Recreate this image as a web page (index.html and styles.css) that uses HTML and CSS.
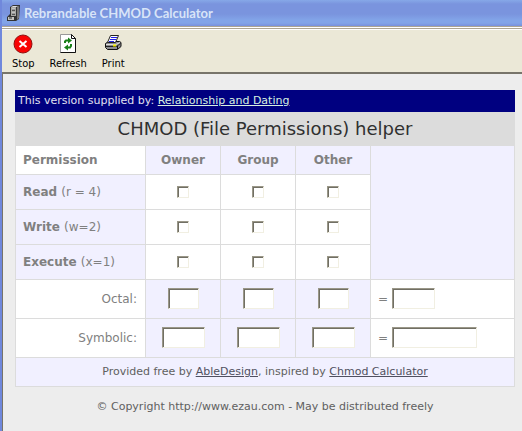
FILE: index.html
```
<!DOCTYPE html>
<html lang="en">
<head>
  <meta charset="UTF-8" />
  <title>Rebrandable CHMOD Calculator</title>
  <meta name="viewport" content="width=device-width, initial-scale=1"/>
  <link rel="stylesheet" href="styles.css">
</head>
<body>
  <div class="window">
    <div class="titlebar">
      <svg class="app-icon" width="16" height="18" viewBox="0 0 16 18" aria-hidden="true">
        <path d="M4 3l3-2h7l-1 14-3 2H1v-4l3-3z" fill="#333"/>
        <path d="M5 3h5v9H5z" fill="#a9a9a5"/>
        <path d="M5 3l2-1h6l-3 1z" fill="#ddd"/>
        <path d="M11 3l2-1v12l-2 2z" fill="#777"/>
        <path d="M6 5h3v2H6zM6 9h3v2H6z" fill="#555"/>
        <path d="M6 5h3M6 9h3" stroke="#ddd"/>
        <path d="M2 13h6v3H2z" fill="#c4c4c0"/>
        <path d="M3 14h3" stroke="#333"/>
      </svg>
      <span class="title">Rebrandable CHMOD Calculator</span>
    </div>
    <div class="toolbar">
      <button class="tool" type="button">
        <svg width="20" height="20" viewBox="0 0 20 20" aria-hidden="true">
          <circle cx="10" cy="10" r="9" fill="#f80404" stroke="#901010"/>
          <path d="M6.5 7l7 6M13.5 7l-7 6" stroke="#fff" stroke-width="2"/>
        </svg>
        <span>Stop</span>
      </button>
      <button class="tool" type="button">
        <svg width="20" height="20" viewBox="0 0 20 20" aria-hidden="true">
          <path d="M2.500.500h11l4 4v14h-15z" fill="#fff" stroke="#999"/>
          <path d="M13.500.500v4h4v14h-15M13.500.500l4 4" fill="none" stroke="#111"/>
          <path d="M7 9V7.500l1-1h3" fill="none" stroke="#188018" stroke-width="2"/>
          <path d="M10 3.500l4 3-4 3z" fill="#188018"/>
          <path d="M13 10v2l-1 1.500H9" fill="none" stroke="#188018" stroke-width="2"/>
          <path d="M10 10.500l-4 3 4 3z" fill="#188018"/>
        </svg>
        <span>Refresh</span>
      </button>
      <button class="tool" type="button">
        <svg width="20" height="20" viewBox="0 0 20 20" aria-hidden="true">
          <path d="M2.500 9.500l3-2h11l1.500 1v4l-3.500 3h-10l-2-2z" fill="#8c8c90" stroke="#111"/>
          <path d="M7.500 1.500h8l-3 7h-8z" fill="#fff" stroke="#222"/>
          <path d="M8 3.500h6M7 5.500h6M6 7.500h5" stroke="#2020e8"/>
          <path d="M3 10.500h10l4-2" fill="none" stroke="#ddd"/>
          <path d="M3 12.500h10.500l4-3" fill="none" stroke="#222"/>
          <path d="M14.500 12v3" stroke="#111"/>
          <path d="M10 11.500h3" stroke="#f0e800" stroke-width="2"/>
        </svg>
        <span>Print</span>
      </button>
    </div>
    <div class="page">
      <form>
        <div class="supplied">This version supplied by: <a href="#">Relationship and Dating</a></div>
        <h1>CHMOD (File Permissions) helper</h1>
        <table class="perms">
          <colgroup>
            <col class="col-label"><col class="col-who"><col class="col-who"><col class="col-who"><col>
          </colgroup>
          <tr class="row-head">
            <th class="label white" scope="col">Permission</th>
            <th scope="col">Owner</th>
            <th scope="col">Group</th>
            <th scope="col">Other</th>
            <td rowspan="4"></td>
          </tr>
          <tr class="row-check">
            <th class="label" scope="row">Read <span>(r = 4)</span></th>
            <td class="white"><input type="checkbox" aria-label="Owner read"></td>
            <td class="white"><input type="checkbox" aria-label="Group read"></td>
            <td class="white"><input type="checkbox" aria-label="Other read"></td>
          </tr>
          <tr class="row-check">
            <th class="label" scope="row">Write <span>(w=2)</span></th>
            <td class="white"><input type="checkbox" aria-label="Owner write"></td>
            <td class="white"><input type="checkbox" aria-label="Group write"></td>
            <td class="white"><input type="checkbox" aria-label="Other write"></td>
          </tr>
          <tr class="row-check">
            <th class="label" scope="row">Execute <span>(x=1)</span></th>
            <td class="white"><input type="checkbox" aria-label="Owner execute"></td>
            <td class="white"><input type="checkbox" aria-label="Group execute"></td>
            <td class="white"><input type="checkbox" aria-label="Other execute"></td>
          </tr>
          <tr class="row-result">
            <td class="result white">Octal:</td>
            <td><input class="box small" type="text" aria-label="Owner octal"></td>
            <td><input class="box small" type="text" aria-label="Group octal"></td>
            <td><input class="box small" type="text" aria-label="Other octal"></td>
            <td class="total white"><label>= <input class="box medium" type="text" aria-label="Octal total"></label></td>
          </tr>
          <tr class="row-result">
            <td class="result white">Symbolic:</td>
            <td><input class="box medium" type="text" aria-label="Owner symbolic"></td>
            <td><input class="box medium" type="text" aria-label="Group symbolic"></td>
            <td><input class="box medium" type="text" aria-label="Other symbolic"></td>
            <td class="total white"><label>= <input class="box large" type="text" aria-label="Symbolic total"></label></td>
          </tr>
          <tr class="row-credit">
            <td colspan="5">Provided free by <a href="#">AbleDesign</a>, inspired by <a href="#">Chmod Calculator</a></td>
          </tr>
        </table>
      </form>
      <p class="copyright">© Copyright http://www.ezau.com - May be distributed freely</p>
    </div>
  </div>
</body>
</html>
```
FILE: styles.css
```
* {
  box-sizing: border-box;
}
body {
  margin: 0;
  background: #ededed;
  color: #808080;
  font-family: Verdana, "DejaVu Sans", sans-serif;
  font-size: 12px;
}
.window {
  min-height: 100vh;
  display: flex;
  flex-direction: column;
  border-left: 2px solid #7088dc;
}
.titlebar {
  display: flex;
  align-items: center;
  gap: 2px;
  height: 26px;
  padding-left: 4px;
  background: linear-gradient(#86a8e8 0, #7a94de 4px, #7a94de 14px, #82a4e8 20px, #82a4e8 23px, #7890dc 26px);
}
.title {
  color: #d8e4f8;
  font-family: "Trebuchet MS", Lato, sans-serif;
  font-size: 13px;
  font-weight: bold;
}
.toolbar {
  display: flex;
  gap: 15px;
  height: 48px;
  padding: 7px 10px 0;
  border-top: 1px solid #aca593;
  border-bottom: 2px solid #77746a;
  background: #ebe8d7;
  box-shadow: inset 0 1px #fff, inset 0 2px #aca593, inset 0 3px #fff;
}
.tool {
  display: flex;
  flex-direction: column;
  align-items: center;
  gap: 2px;
  height: 38px;
  padding: 0;
  border: none;
  background: none;
  color: #000;
  font-family: Tahoma, "DejaVu Sans Condensed", sans-serif;
  font-size: 11px;
  line-height: 16px;
}
.page {
  flex: 1;
  padding: 16px 7px 0 12px;
  border-left: 1px solid #77746a;
}
.supplied {
  padding: 0 3px;
  background: #000080;
  color: #e0e0f0;
  font-size: 11px;
  line-height: 22px;
}
.supplied a {
  color: #d8f0e0;
}
h1 {
  margin: 0;
  background: #dcdcdc;
  color: #303030;
  font-size: 18px;
  font-weight: normal;
  line-height: 34px;
  text-align: center;
}
.perms {
  width: 100%;
  table-layout: fixed;
  border-collapse: collapse;
  background: #f1f0ff;
}
.perms th,
.perms td {
  padding: 0;
  border: 1px solid #dcdcdc;
  text-align: center;
}
.perms tr:first-child th,
.perms tr:first-child td {
  border-top: none;
}
.col-label {
  width: 130px;
}
.col-who {
  width: 75px;
}
.perms .label {
  padding-left: 7px;
  text-align: left;
}
.label span {
  font-weight: normal;
}
.perms .white {
  background: #fff;
}
.row-head {
  height: 28px;
}
.row-check {
  height: 35px;
}
.row-result {
  height: 39px;
}
.row-credit {
  height: 29px;
}
.perms .result {
  padding-right: 8px;
  text-align: right;
}
.perms .total {
  padding-left: 7px;
  text-align: left;
}
.total label {
  display: flex;
  align-items: center;
  gap: 4px;
}
input {
  border: 1px solid;
  border-color: #9a9788 #f1efe2 #f1efe2 #9a9788;
  background: #fff;
  box-shadow: inset 1px 1px #716f64;
}
input[type="checkbox"] {
  appearance: none;
  display: block;
  width: 12px;
  height: 12px;
  margin: 0 auto;
}
input[type="checkbox"]:checked {
  background: #404040;
}
.box {
  height: 21px;
  padding: 0 2px;
  vertical-align: middle;
}
.small {
  width: 31px;
}
.medium {
  width: 43px;
}
.large {
  width: 85px;
}
.row-credit,
.copyright {
  color: #606060;
  font-size: 11px;
}
.row-credit a {
  color: #505060;
}
.copyright {
  margin: 12px 0;
  line-height: 16px;
  text-align: center;
}
```
